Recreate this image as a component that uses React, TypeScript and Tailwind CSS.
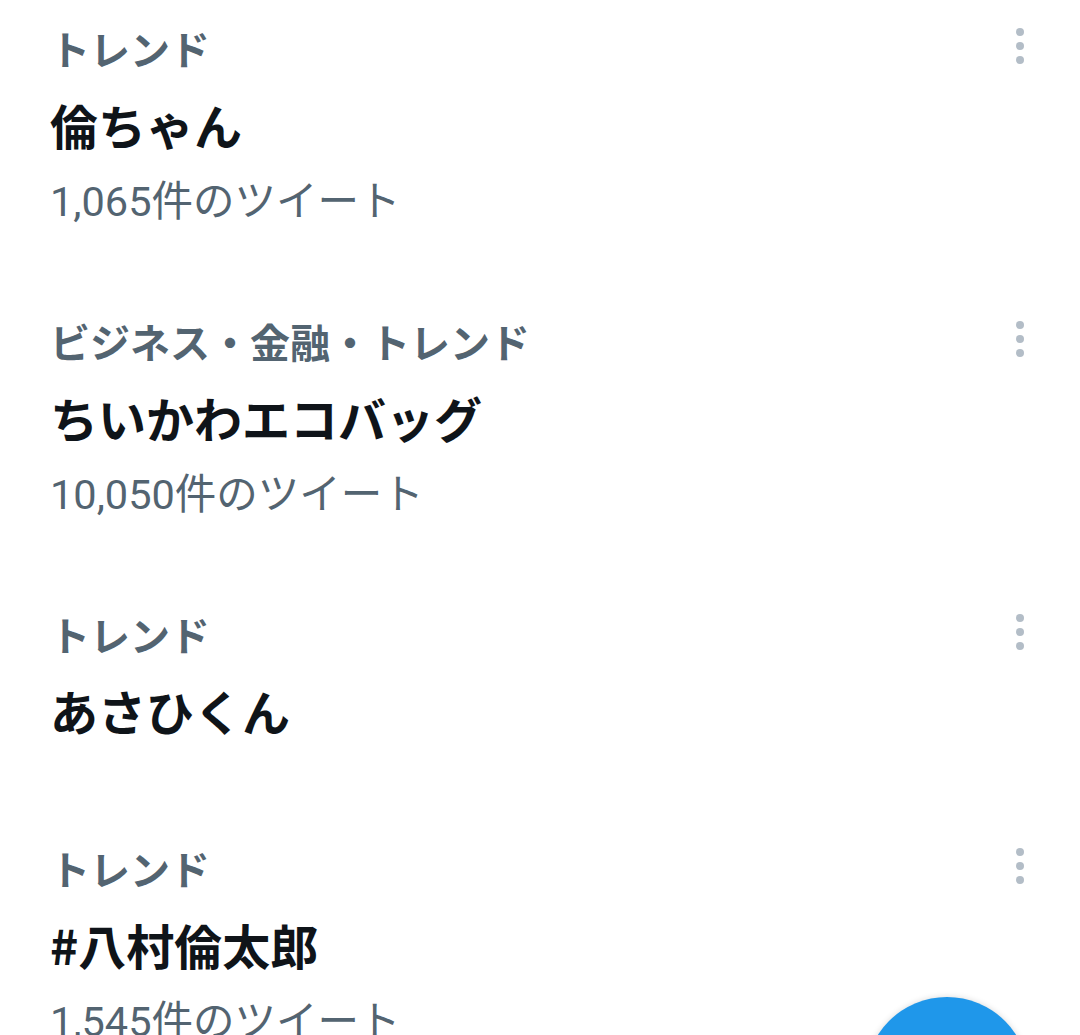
import React from 'react';

type Trend = {
  id: number;
  category: string;
  title: string;
  count?: string;
};

const trends: Trend[] = [
  { id: 1, category: 'トレンド', title: '倫ちゃん', count: '1,065件のツイート' },
  { id: 2, category: 'ビジネス・金融・トレンド', title: 'ちいかわエコバッグ', count: '10,050件のツイート' },
  { id: 3, category: 'トレンド', title: 'あさひくん' },
  { id: 4, category: 'トレンド', title: '#八村倫太郎', count: '1,545件のツイート' },
];

const font = { fontFamily: '"Noto Sans CJK JP", Roboto, sans-serif' };
// counts use Roboto digits like the Android app
const countFont = { fontFamily: 'Roboto, "Noto Sans CJK JP", sans-serif' };

function MoreDots() {
  return (
    <div className="mt-[6px] flex flex-col items-center gap-[6px]">
      <span className="h-[8px] w-[8px] rounded-full bg-[#b3bdc7]" />
      <span className="h-[8px] w-[8px] rounded-full bg-[#b3bdc7]" />
      <span className="h-[8px] w-[8px] rounded-full bg-[#b3bdc7]" />
    </div>
  );
}

function TrendItem({ trend }: { trend: Trend }) {
  return (
    <div
      className={`flex items-start justify-between pl-[50px] pr-[56px] pt-[22px] ${
        trend.count ? 'pb-[65px]' : 'pb-[80px]'
      }`}
    >
      <div className="flex flex-1 flex-col">
        <p className="h-[52px] whitespace-nowrap text-[40px] font-semibold leading-[52px] text-[#536471]">
          {trend.category}
        </p>
        <h3 className="mt-[20px] h-[60px] whitespace-nowrap text-[48px] font-bold leading-[60px] text-[#0f1419]">
          {trend.title}
        </h3>
        {trend.count && (
          <p
            className="mt-[22px] h-[52px] whitespace-nowrap text-[41.5px] leading-[52px] text-[#536471]"
            style={countFont}
          >
            {trend.count}
          </p>
        )}
      </div>
      <MoreDots />
    </div>
  );
}

export default function App() {
  return (
    <div className="relative h-[1035px] w-[1080px] overflow-hidden bg-white" style={font}>
      {trends.map((trend) => (
        <TrendItem key={trend.id} trend={trend} />
      ))}
      {/* compose button, cut off by the bottom edge */}
      <div className="absolute left-[865px] top-[997px] h-[164px] w-[164px] rounded-full bg-[#1f97ea] shadow-[0_0_6px_rgba(0,0,0,0.15)]" />
    </div>
  );
}
